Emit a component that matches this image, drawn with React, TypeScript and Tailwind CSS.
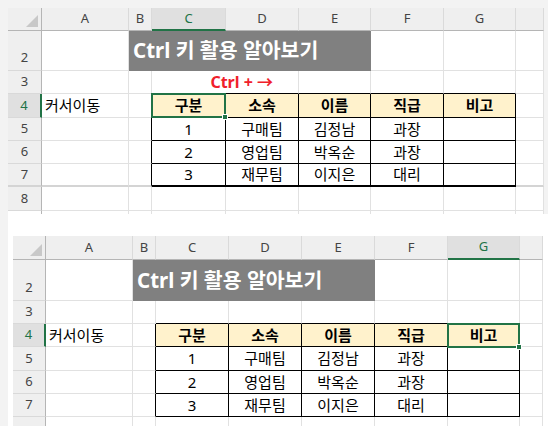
import React from "react";

const letters = ["A", "B", "C", "D", "E", "F", "G", ""];
const head = ["구분", "소속", "이름", "직급", "비고"];
const data = [
  ["1", "구매팀", "김정남", "과장", ""],
  ["2", "영업팀", "박옥순", "과장", ""],
  ["3", "재무팀", "이지은", "대리", ""],
];

function gridCls(r: number, c: number, thick: boolean) {
  const inTable = r >= 4 && r <= 7 && c >= 2 && c <= 6;
  const aboveTable = r === 3 && c >= 2 && c <= 6;
  const leftTable = r >= 4 && r <= 7 && c === 1;
  const thickRow = thick && r === 7;
  let cls = thickRow ? "border-r border-b-2 " : "border-r border-b ";
  cls += inTable || leftTable ? "border-r-black " : "border-r-[#e1e1e1] ";
  cls += inTable || aboveTable ? "border-b-black " : thickRow ? "border-b-[#d4d4d4] " : "border-b-[#e1e1e1] ";
  return cls;
}

type SheetProps = {
  rhW: string;
  colW: string[];
  rowH: string[];
  sel: number;
  selBox: string;
  thick: boolean;
  red: boolean;
  lastH: string;
  showLastNum: boolean;
};

function Selection({ selBox }: { selBox: string }) {
  return (
    <div className={"pointer-events-none absolute -left-[1px] -top-[1px] z-10 border-2 border-[#217346] " + selBox}>
      <div className="absolute -bottom-[4px] -right-[4px] h-[6px] w-[6px] border border-white bg-[#217346]" />
    </div>
  );
}

function Sheet({ rhW, colW, rowH, sel, selBox, thick, red, lastH, showLastNum }: SheetProps) {
  const rows: React.ReactNode[] = [];

  rows.push(
    <div key="hdr" className={"flex " + rowH[0]}>
      <div className={"relative box-border flex h-full shrink-0 border-b border-r border-b-[#b5b5b5] border-r-[#b5b5b5] bg-[#efefef] " + rhW}>
        <svg className="absolute bottom-[3px] right-[3px]" width="12" height="12" viewBox="0 0 12 12">
          <polygon points="12,0 12,12 0,12" fill="#c8c8c8" />
        </svg>
      </div>
      {letters.map((l, c) => (
        <div
          key={c}
          className={
            "relative box-border flex h-full shrink-0 items-center justify-center border-r border-r-[#dadada] text-[13px] " +
            colW[c] +
            (c === sel
              ? " border-b-2 border-b-[#217346] bg-[#e0e0e0] text-[#217346]"
              : " border-b border-b-[#b5b5b5] bg-[#efefef] text-[#444]")
          }
        >
          {l}
        </div>
      ))}
    </div>
  );

  for (let r = 2; r <= 8; r++) {
    const cells: React.ReactNode[] = [];
    const thickRow = thick && r === 7;
    const rhCls =
      "relative box-border flex h-full shrink-0 justify-center text-[13px] " +
      rhW +
      (r === 2 ? " items-end pb-[3px]" : " items-center") +
      (r === 4
        ? " border-r-2 border-r-[#217346] bg-[#e0e0e0] text-[#217346]"
        : " border-r border-r-[#b5b5b5] bg-[#efefef] text-[#444]") +
      (thickRow ? " border-b-2 border-b-[#d4d4d4]" : " border-b border-b-[#d9d9d9]");
    cells.push(
      <div key="rh" className={rhCls}>
        {r === 8 && !showLastNum ? "" : r}
      </div>
    );
    for (let c = 0; c < 8; c++) {
      if (r === 2 && c >= 2 && c <= 4) continue;
      if (r === 3 && red && c === 3) continue;
      if (r === 2 && c === 1) {
        cells.push(
          <div
            key={c}
            className="relative box-border flex h-full w-[242px] shrink-0 items-center whitespace-nowrap border-b border-r border-[#808080] bg-[#808080] pl-[4px] text-[20.5px] font-bold text-white"
          >
            Ctrl 키 활용 알아보기
          </div>
        );
        continue;
      }
      if (r === 3 && red && c === 2) {
        cells.push(
          <div
            key={c}
            className="relative box-border flex h-full w-[147px] shrink-0 items-center justify-end whitespace-nowrap border-b border-r border-b-black border-r-[#e1e1e1] pr-[25px] text-[16px] font-bold text-[#f0202b]"
          >
            Ctrl + →
          </div>
        );
        continue;
      }
      const inTable = r >= 4 && r <= 7 && c >= 2 && c <= 6;
      let content: React.ReactNode = null;
      let extra = "";
      if (inTable) {
        if (r === 4) {
          content = head[c - 2];
          extra = " items-center justify-center bg-[#fff2cc] font-bold text-[15px] text-black";
        } else {
          content = data[r - 5][c - 2];
          extra = " items-center justify-center text-[15px] text-black";
        }
      } else if (r === 4 && c === 0) {
        content = "커서이동";
        extra = " items-center whitespace-nowrap pl-[3px] text-[15px] text-black";
      }
      cells.push(
        <div key={c} className={"relative box-border flex h-full shrink-0 " + colW[c] + " " + gridCls(r, c, thick) + extra}>
          {content}
          {r === 4 && c === sel ? <Selection selBox={selBox} /> : null}
        </div>
      );
    }
    rows.push(
      <div key={r} className={"flex " + rowH[r - 1]}>
        {cells}
      </div>
    );
  }

  rows.push(
    <div key="last" className={"flex " + lastH}>
      <div className={"box-border h-full shrink-0 border-r border-r-[#b5b5b5] " + rhW + (thick ? " bg-white" : " bg-[#efefef]")} />
      {letters.map((_, c) => (
        <div key={c} className={"box-border h-full shrink-0 border-r border-r-[#e1e1e1] " + colW[c]} />
      ))}
    </div>
  );

  return <div className="flex shrink-0 flex-col overflow-hidden bg-white">{rows}</div>;
}

export default function App() {
  return (
    <div className="relative h-[426px] w-[548px] overflow-hidden bg-white font-['Noto_Sans','Noto_Sans_CJK_KR',sans-serif]">
      <div className="h-[8px] bg-[#f3f3f3]" />
      <div className="flex">
        <div className="w-[8px] shrink-0 bg-[#f3f3f3]" />
        <div className="flex flex-col">
          <div className="flex">
            <Sheet
              rhW="w-[34px]"
              colW={["w-[87px]", "w-[23px]", "w-[74px]", "w-[73px]", "w-[72px]", "w-[73px]", "w-[72px]", "w-[28px]"]}
              rowH={["h-[23px]", "h-[40px]", "h-[23px]", "h-[24px]", "h-[23px]", "h-[23px]", "h-[23px]", "h-[24px]"]}
              sel={2}
              selBox="h-[25px] w-[75px]"
              thick={true}
              red={true}
              lastH="h-[3px]"
              showLastNum={true}
            />
            <div className="w-[4px] shrink-0 bg-[#f3f3f3]" />
          </div>
          <div className="h-[22px]" />
          <div className="flex pl-[5px]">
            <Sheet
              rhW="w-[33px]"
              colW={["w-[87px]", "w-[23px]", "w-[73px]", "w-[73px]", "w-[73px]", "w-[73px]", "w-[72px]", "w-[23px]"]}
              rowH={["h-[24px]", "h-[41px]", "h-[23px]", "h-[23px]", "h-[24px]", "h-[23px]", "h-[23px]", "h-[23px]"]}
              sel={6}
              selBox="h-[25px] w-[73px]"
              thick={false}
              red={false}
              lastH="h-[10px]"
              showLastNum={false}
            />
          </div>
        </div>
      </div>
    </div>
  );
}
